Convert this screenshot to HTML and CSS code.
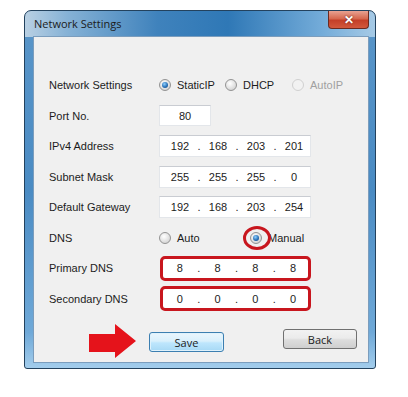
FILE: index.html
```html
<!DOCTYPE html>
<html lang="en">
<head>
  <meta charset="UTF-8" />
  <title>Network Settings</title>
  <link rel="stylesheet" href="styles.css">
</head>
<body>

  <div class="window">
    <div class="titlebar">
      <span class="title">Network Settings</span>
      <span class="close">&#x2715;</span>
    </div>

    <div class="client">
      <div class="form">
        <span class="label">Network Settings</span>
        <div class="options">
          <span class="opt opt-static"><span class="radio checked"></span>StaticIP</span>
          <span class="opt opt-dhcp"><span class="radio"></span>DHCP</span>
          <span class="opt disabled"><span class="radio"></span>AutoIP</span>
        </div>

        <span class="label">Port No.</span>
        <div><span class="field port">80</span></div>

        <span class="label">IPv4 Address</span>
        <div class="ipbox"><span>192</span><i>.</i><span>168</span><i>.</i><span>203</span><i>.</i><span>201</span></div>

        <span class="label">Subnet Mask</span>
        <div class="ipbox"><span>255</span><i>.</i><span>255</span><i>.</i><span>255</span><i>.</i><span>0</span></div>

        <span class="label">Default Gateway</span>
        <div class="ipbox"><span>192</span><i>.</i><span>168</span><i>.</i><span>203</span><i>.</i><span>254</span></div>

        <span class="label">DNS</span>
        <div class="options">
          <span class="opt opt-auto"><span class="radio"></span>Auto</span>
          <span class="opt"><span class="radio checked"><span class="ring"></span></span>Manual</span>
        </div>

        <span class="label">Primary DNS</span>
        <div class="ipbox marked"><span>8</span><i>.</i><span>8</span><i>.</i><span>8</span><i>.</i><span>8</span></div>

        <span class="label">Secondary DNS</span>
        <div class="ipbox marked"><span>0</span><i>.</i><span>0</span><i>.</i><span>0</span><i>.</i><span>0</span></div>
      </div>

      <div class="buttons">
        <svg class="arrow" width="47" height="36" viewBox="0 0 47 36">
          <polygon points="0,11 26,11 26,1 47,18 26,35 26,29 0,29" fill="#e5131b"/>
        </svg>
        <button class="btn btn-default">Save</button>
        <button class="btn btn-back">Back</button>
      </div>
    </div>
  </div>

</body>
</html>
```

FILE: styles.css
```css
body {
  margin: 0;
  background: #fff;
  font-family: "Liberation Sans", Arial, sans-serif;
}
.window {
  margin: 10px 0 0 24px;
  width: 352px;
  box-sizing: border-box;
  border: 1px solid #23425e;
  border-radius: 7px 7px 3px 3px;
  padding: 0 6px 5px 8px;
  background:
    linear-gradient(90deg, #b9d0e3 0%, #86b2d6 12%, #3f82bc 38%, #2f78b6 58%, #74acd9 85%, #a6cae6 100%) top / 100% 26px no-repeat,
    linear-gradient(180deg, #5a96c9 0%, #4a8bc3 50%, #6fa9d8 90%, #a3cdec 100%);
}
.titlebar {
  height: 25px;
  display: flex;
  justify-content: space-between;
  align-items: flex-start;
}
.title {
  font-family: "Open Sans", "Noto Sans", sans-serif;
  font-size: 11px;
  color: #1b1b1b;
  margin: 5px 0 0 1px;
}
.close {
  width: 41px;
  height: 18px;
  border: 1px solid #6b2a20;
  border-top: none;
  border-radius: 0 0 4px 4px;
  background: linear-gradient(180deg, #e8a292 0%, #d6684f 45%, #c43f28 55%, #d2583c 100%);
  color: #fff;
  font-size: 12px;
  font-weight: bold;
  display: flex;
  justify-content: center;
  align-items: center;
  box-sizing: border-box;
  text-shadow: 0 0 2px #5a1a10;
}
.client {
  background: #f0f0f0;
  border: 1px solid #7b9dbd;
  padding: 33px 0 3px 15px;
}
.form {
  display: grid;
  grid-template-columns: 110px 1fr;
  grid-auto-rows: 30.5px;
  align-items: center;
  font-size: 11px;
  color: #1c1c1c;
}
.options {
  display: flex;
  align-items: center;
}
.opt {
  display: flex;
  align-items: center;
  gap: 6px;
  position: relative;
}
.opt-static { width: 66px; }
.opt-dhcp { width: 67px; }
.opt-auto { width: 91px; }
.disabled { color: #a0a0a0; }
.radio {
  width: 12px;
  height: 12px;
  box-sizing: border-box;
  border-radius: 50%;
  border: 1px solid #939393;
  background: radial-gradient(circle at 40% 35%, #ffffff 0%, #e4e4e4 50%, #c9c9c9 100%);
  position: relative;
}
.disabled .radio {
  border-color: #d0d0d0;
  background: #f2f2f2;
}
.radio.checked::after {
  content: "";
  position: absolute;
  left: 2px;
  top: 2px;
  width: 6px;
  height: 6px;
  border-radius: 50%;
  background: radial-gradient(circle at 40% 35%, #8fd0ff 0%, #2a72b8 55%, #0d3e78 100%);
}
.ring {
  position: absolute;
  left: -8px;
  top: -7px;
  width: 22px;
  height: 18px;
  border: 3px solid #c8161e;
  border-radius: 50%;
}
.field {
  display: inline-block;
  width: 52px;
  height: 21px;
  line-height: 21px;
  text-align: center;
  background: #fff;
  border: 1px solid #e3e6ea;
  border-top-color: #c9ccd2;
  box-sizing: border-box;
}
.ipbox {
  width: 152px;
  height: 22px;
  box-sizing: border-box;
  background: #fff;
  border: 1px solid #e3e6ea;
  border-top-color: #c9ccd2;
  display: flex;
  align-items: center;
  padding-left: 5px;
}
.ipbox span {
  width: 30px;
  text-align: center;
}
.ipbox i {
  width: 8px;
  text-align: center;
  font-style: normal;
}
.ipbox.marked {
  width: 151px;
  height: 25px;
  margin-left: 1px;
  border: 3px solid #c8161e;
  border-radius: 5px;
  padding-left: 2px;
}
.buttons {
  display: flex;
  align-items: flex-start;
  margin-top: 9px;
  padding-left: 40px;
}
.arrow {
  display: block;
  margin-right: 13px;
}
.btn {
  font-family: "Open Sans", "Noto Sans", sans-serif;
  font-size: 11px;
  color: #1b1b1b;
  height: 20px;
  padding: 0;
  border-radius: 3px;
  box-sizing: border-box;
}
.btn-default {
  width: 75px;
  margin-top: 9px;
  border: 1px solid #3c7fb1;
  background: linear-gradient(180deg, #eaf6fd 0%, #d9f0fc 45%, #bee6fd 55%, #a7d9f5 100%);
  box-shadow: inset 0 0 0 1px #dff2fc;
}
.btn-back {
  width: 74px;
  margin-top: 6px;
  margin-left: 59px;
  border: 1px solid #707070;
  background: linear-gradient(180deg, #f2f2f2 0%, #ebebeb 45%, #dddddd 55%, #cfcfcf 100%);
}
```
